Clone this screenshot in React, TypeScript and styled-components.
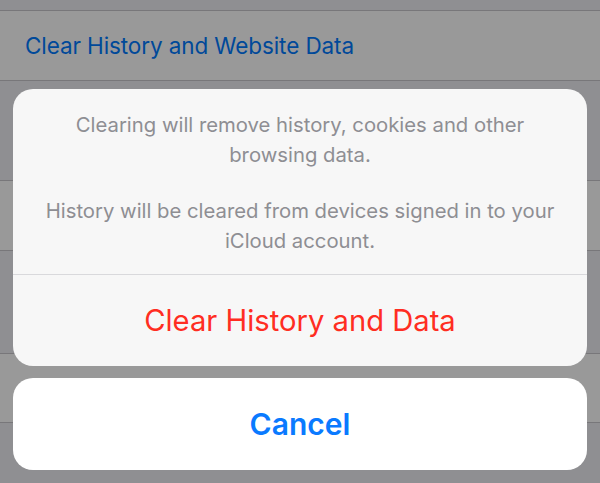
import React from "react";
import styled, { createGlobalStyle } from "styled-components";

const Global = createGlobalStyle`
  html, body { margin: 0; padding: 0; }
  body { width: 600px; height: 483px; overflow: hidden; font-family: Inter, "Noto Sans", sans-serif; }
`;

const Screen = styled.div`
  position: relative;
  width: 600px;
  height: 483px;
  overflow: hidden;
  background: #efeff4;
`;

const Gap = styled.div<{ $h: number }>`
  height: ${(p) => p.$h}px;
`;

const Row = styled.div<{ $h: number }>`
  height: ${(p) => p.$h}px;
  background: #ffffff;
  border-top: 1px solid #c8c7cc;
  border-bottom: 1px solid #c8c7cc;
  display: flex;
  align-items: center;
  justify-content: space-between;
  padding: 0 22px 0 25px;
  box-sizing: border-box;
`;

const RowLabel = styled.span<{ $color: string }>`
  font-size: 22.5px;
  color: ${(p) => p.$color};
  letter-spacing: -0.1px;
`;

const Chevron = styled.span`
  color: #c7c7cc;
  font-size: 24px;
`;

const Dim = styled.div`
  position: absolute;
  inset: 0;
  background: rgba(0, 0, 0, 0.4);
  display: flex;
  flex-direction: column;
  justify-content: flex-end;
  padding: 0 13px 13px;
  gap: 12px;
`;

const Sheet = styled.div<{ $bg: string }>`
  background: ${(p) => p.$bg};
  border-radius: 20px;
  overflow: hidden;
  display: flex;
  flex-direction: column;
`;

const Message = styled.div`
  height: 186px;
  box-sizing: border-box;
  padding: 21px 28px 0;
  border-bottom: 1px solid #d9d9dc;
  color: #8e8e93;
  font-size: 20.3px;
  line-height: 29.5px;
  text-align: center;
  display: flex;
  flex-direction: column;
  gap: 27px;
`;

const Para = styled.p`
  margin: 0;
`;

const Action = styled.div<{ $color: string; $weight: number; $h: number; $size: number }>`
  height: ${(p) => p.$h}px;
  display: flex;
  align-items: center;
  justify-content: center;
  color: ${(p) => p.$color};
  font-weight: ${(p) => p.$weight};
  font-size: ${(p) => p.$size}px;
`;

export default function App() {
  return (
    <>
      <Global />
      <Screen>
        <Gap $h={10} />
        <Row $h={71}>
          <RowLabel $color="#007aff">Clear History and Website Data</RowLabel>
        </Row>
        <Gap $h={99} />
        <Row $h={71} />
        <Gap $h={102} />
        <Row $h={70}>
          <RowLabel $color="#000000">Advanced</RowLabel>
          <Chevron>›</Chevron>
        </Row>
        <Dim>
          <Sheet $bg="#f7f7f7">
            <Message>
              <Para>Clearing will remove history, cookies and other browsing data.</Para>
              <Para>History will be cleared from devices signed in to your iCloud account.</Para>
            </Message>
            <Action $color="#ff2d22" $weight={400} $h={91} $size={29.2}>Clear History and Data</Action>
          </Sheet>
          <Sheet $bg="#ffffff">
            <Action $color="#0a7aff" $weight={600} $h={92} $size={30}>Cancel</Action>
          </Sheet>
        </Dim>
      </Screen>
    </>
  );
}
